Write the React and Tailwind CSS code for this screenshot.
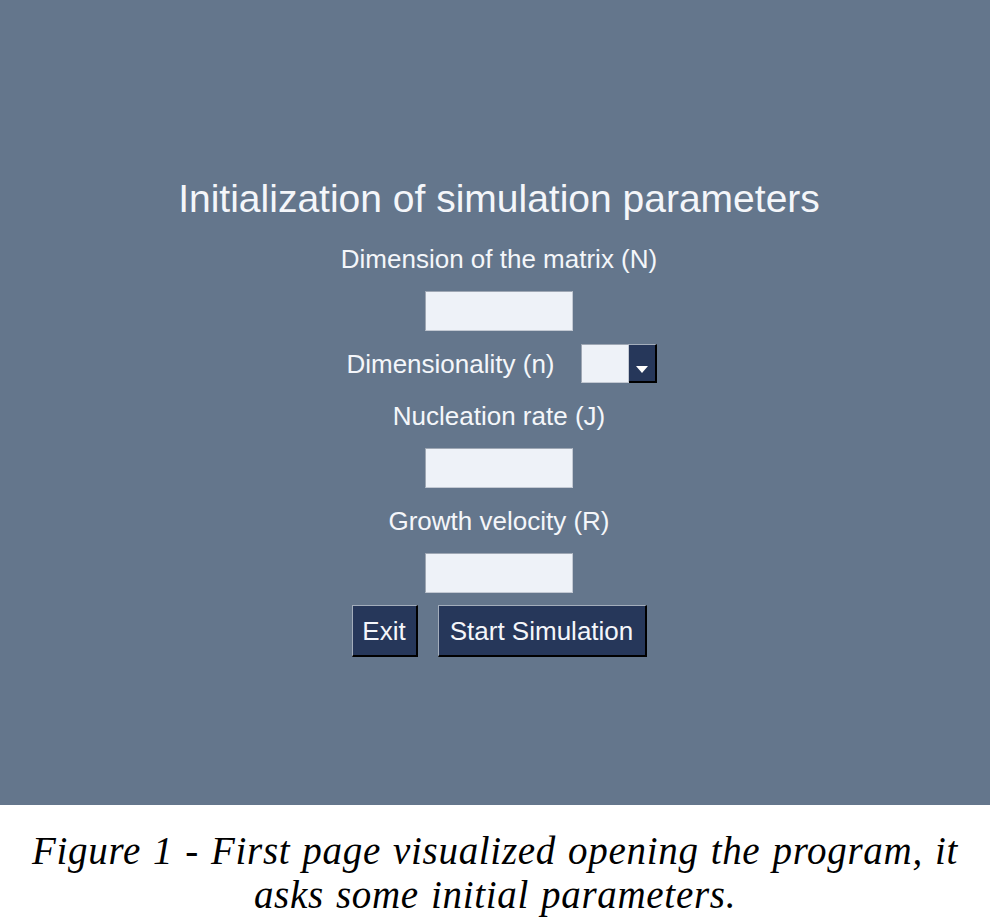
import React from 'react';

const sans = { fontFamily: '"Liberation Sans", Arial, sans-serif' };

const Field = ({ className = '' }) => (
  <div className={`w-[148px] h-[40px] bg-[#eef2f8] border border-[#c3c9d3] border-t-[#9ea7b4] border-l-[#9ea7b4] ${className}`} />
);

const Label = ({ children, className = '' }) => (
  <div className={`text-[26px] leading-[26px] text-[#f4f6fa] whitespace-nowrap ${className}`}>{children}</div>
);

const Button = ({ children, width }) => (
  <button
    className={`${width} h-[52px] bg-[#26375a] text-[#f4f6fa] text-[26px] leading-[26px] border-t border-l border-[#a3adbb] border-r-2 border-b-2 border-r-black border-b-black flex items-center justify-center`}
  >
    {children}
  </button>
);

export default function App() {
  return (
    <div className="w-[990px] h-[920px] bg-white flex flex-col" style={sans}>
      <div className="h-[805px] bg-[#64768c] flex flex-col items-center pl-2">
        <h1 className="mt-[179px] text-[39px] leading-[39px] text-[#f4f6fa] whitespace-nowrap">
          Initialization of simulation parameters
        </h1>
        <Label className="mt-[28px]">Dimension of the matrix (N)</Label>
        <Field className="mt-[19px]" />
        <div className="mt-[13px] flex items-center gap-[26px] pl-[5px]">
          <Label>Dimensionality (n)</Label>
          <div className="flex h-[39px]">
            <div className="w-[48px] h-full bg-[#eef2f8] border border-[#c3c9d3] border-t-[#9ea7b4] border-l-[#9ea7b4]" />
            <div className="w-[28px] h-full bg-[#26375a] border-t border-[#a3adbb] border-r-2 border-b-2 border-r-black border-b-black flex items-end justify-center pb-[8px]">
              <svg width="12" height="7" viewBox="0 0 12 7">
                <path d="M0 0 H12 L6 7 Z" fill="#ffffff" />
              </svg>
            </div>
          </div>
        </div>
        <Label className="mt-[20px]">Nucleation rate (J)</Label>
        <Field className="mt-[19px]" />
        <Label className="mt-[20px]">Growth velocity (R)</Label>
        <Field className="mt-[19px]" />
        <div className="mt-[12px] flex gap-[20px]">
          <Button width="w-[66px]">Exit</Button>
          <Button width="w-[209px]">Start Simulation</Button>
        </div>
      </div>
      <div
        className="flex-1 flex flex-col items-center pt-[24px] text-black italic text-[39px] leading-[44px] tracking-[0.7px] [word-spacing:1.6px]"
        style={{ fontFamily: '"Liberation Serif", "Times New Roman", serif' }}
      >
        <p className="whitespace-nowrap">Figure 1 - First page visualized opening the program, it</p>
        <p className="whitespace-nowrap">asks some initial parameters.</p>
      </div>
    </div>
  );
}
